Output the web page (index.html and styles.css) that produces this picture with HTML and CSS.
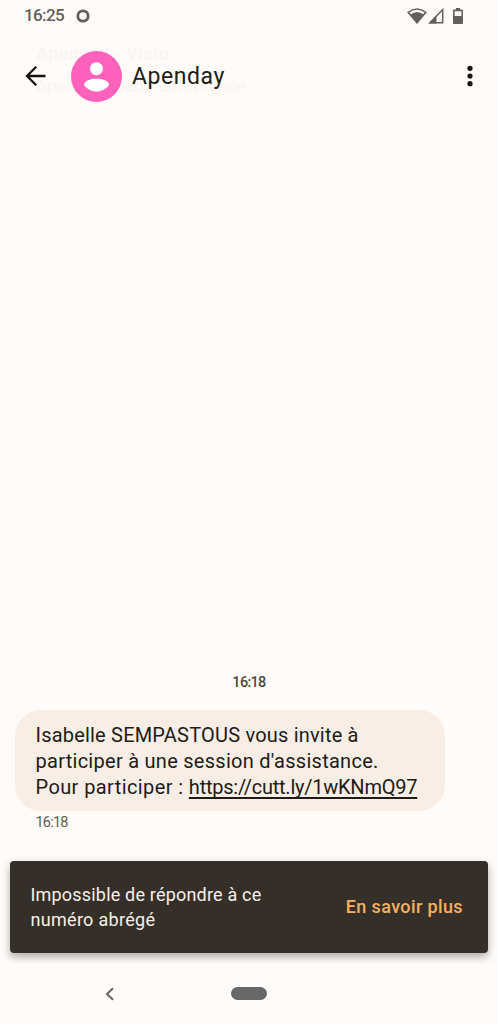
FILE: index.html
```html
<!DOCTYPE html>
<html lang="fr">
<head>
<meta charset="utf-8">
<title>Apenday</title>
<link rel="stylesheet" href="styles.css">
</head>
<body>
<div class="phone">
  <header class="status">
    <span class="clock">16:25</span>
    <svg class="ring" width="14" height="14" viewBox="0 0 14 14"><circle cx="7" cy="7" r="5.2"/></svg>
    <div class="signals">
      <svg width="20" height="16" viewBox="0 0 20 16"><path fill="none" stroke="#625f5d" stroke-width="1.5" d="M1.2 4.3Q10-2.5 18.8 4.3L10 14.8Z"/><path fill="#625f5d" d="M3.5 6.5Q10 1.5 16.5 6.5L10 15Z"/></svg>
      <svg width="17" height="16" viewBox="0 0 17 16"><path fill="none" stroke="#625f5d" stroke-width="1.5" d="M2 14.7H14.7V1.6Z"/><path fill="#625f5d" d="M.5 15.4L8.5 7.2V15.4Z"/></svg>
      <svg class="battery" width="10" height="16" viewBox="0 0 10 16"><path fill="#625f5d" fill-rule="evenodd" d="M3 0H7V1.5H9Q10 1.5 10 2.5V15Q10 16 9 16H1Q0 16 0 15V2.5Q0 1.5 1 1.5H3ZM1.6 3.2V8H8.4V3.2Z"/></svg>
    </div>
  </header>
  <div class="appbar">
    <div class="ghost" aria-hidden="true"><div class="ghost-title">Apenday - Visio</div><div class="ghost-sub">Apenday : visio conférence</div></div>
    <svg class="back" width="22" height="22" viewBox="0 0 22 22"><path d="M20.5 11H2.5M11.2 1.8L2 11L11.2 20.2"/></svg>
    <svg class="avatar" width="51" height="51" viewBox="0 0 51 51"><circle cx="25.5" cy="25.5" r="25.5" fill="#ff62bc"/><circle cx="25.5" cy="17.7" r="6.5" fill="#fff"/><path fill="#fff" d="M13 34C13 29.5 20 27.8 25.5 27.8S38 29.5 38 34C35.2 38 30.7 40.5 25.5 40.5S15.8 38 13 34Z"/></svg>
    <h1 class="name">Apenday</h1>
    <svg class="more" width="6" height="22" viewBox="0 0 6 22"><circle cx="3" cy="3.3" r="2.6"/><circle cx="3" cy="11" r="2.6"/><circle cx="3" cy="18.7" r="2.6"/></svg>
  </div>
  <main class="thread">
    <div class="date">16:18</div>
    <div class="bubble">
      <div class="line l1">Isabelle SEMPASTOUS vous invite à</div>
      <div class="line l2">participer à une session d'assistance.</div>
      <div class="line"><span class="l3">Pour participer : </span><a class="link">https://cutt.ly/1wKNmQ97</a></div>
    </div>
    <div class="sent">16:18</div>
    <div class="snackbar">
      <div class="notice"><div class="n1">Impossible de répondre à ce</div><div class="n2">numéro abrégé</div></div>
      <span class="action">En savoir plus</span>
    </div>
  </main>
  <nav class="navbar">
    <svg class="nav-back" width="10" height="14" viewBox="0 0 10 14"><path d="M8 1.2L2 7L8 12.8"/></svg>
    <div class="pill"></div>
  </nav>
</div>
</body>
</html>
```
FILE: styles.css
```css
* { box-sizing: border-box; }
body { margin: 0; background: #fffbf8; font-family: Roboto, "Liberation Sans", sans-serif; color: #201b16; }
.phone { width: 498px; height: 1024px; display: flex; flex-direction: column; overflow: hidden; }
svg { display: block; flex: none; }
.status { height: 31px; display: flex; align-items: center; padding: 0 35px 0 24px; color: #625f5d; }
.clock { font-size: 17px; font-weight: 500; line-height: 20px; width: 51.5px; letter-spacing: -0.6px; padding-bottom: 1px; }
.ring circle { fill: none; stroke: #625f5d; stroke-width: 2.8; }
.signals { margin-left: auto; display: flex; align-items: center; gap: 1px; }
.battery { margin-left: 7px; }
.appbar { height: 90px; display: flex; align-items: center; padding: 0 25px; position: relative; }
.back path { fill: none; stroke: #17130f; stroke-width: 2.3; }
.avatar { margin-left: 24px; position: relative; }
.name { margin: 1px 0 0 10px; font-size: 23px; font-weight: 400; line-height: 30px; position: relative; letter-spacing: .55px; }
.more { margin-left: auto; fill: #17130f; }
.ghost { position: absolute; left: 15px; top: 8px; width: 431px; height: 66px; padding: 5px 20px; border: 1px solid #fdf8f5; border-width: 0 1px; color: #faf5f1; }
.ghost-title { font-size: 18px; line-height: 20px; font-weight: 500; letter-spacing: .5px; }
.ghost-sub { font-size: 17px; line-height: 20px; margin-top: 12px; letter-spacing: .3px; white-space: nowrap; }
.thread { height: 842px; display: flex; flex-direction: column; justify-content: flex-end; overflow: hidden; padding: 0 10px 10px; }
.date { text-align: center; font-size: 14.5px; font-weight: 500; line-height: 20px; letter-spacing: -.7px; color: #514841; margin-bottom: 17px; }
.bubble { width: 430px; height: 101px; margin-left: 5px; padding: 12px 20.5px; border-radius: 26px; background: #f9eee6; font-size: 20px; line-height: 26px; }
.line { height: 26px; white-space: pre; }
.l1 { letter-spacing: .2px; }
.l2 { letter-spacing: .27px; }
.l3 { letter-spacing: .4px; }
.link { letter-spacing: -.24px; text-decoration: underline; text-decoration-thickness: 1.5px; text-underline-offset: 3px; text-decoration-skip-ink: none; }
.sent { margin: 2px 0 29px 25.5px; font-size: 14.5px; line-height: 19px; letter-spacing: -.8px; color: #625a53; }
.snackbar { height: 92px; flex: none; display: flex; align-items: center; justify-content: space-between; padding: 0 25px 0 20.5px; border-radius: 4px; background: #352f2a; box-shadow: 0 4px 9px rgba(0,0,0,.32); }
.notice { color: #f9efe7; font-size: 18px; line-height: 25px; letter-spacing: .19px; }
.n2 { letter-spacing: .3px; }
.action { color: #f4b261; font-size: 18px; font-weight: 500; letter-spacing: .38px; padding-bottom: 2px; }
.navbar { height: 61px; display: flex; align-items: center; padding-left: 105px; }
.nav-back path { fill: none; stroke: #666361; stroke-width: 2; }
.pill { width: 36px; height: 13px; margin-left: 116px; border-radius: 7px; background: #686868; }
```
